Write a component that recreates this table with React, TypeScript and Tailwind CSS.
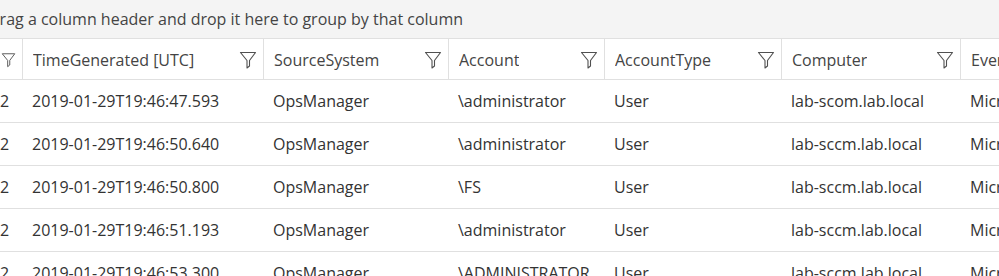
import { Fragment } from "react";

const columns = [
  { key: "c0", label: "", width: "w-[23px]" },
  { key: "time", label: "TimeGenerated [UTC]", width: "w-[241px]" },
  { key: "source", label: "SourceSystem", width: "w-[185px]" },
  { key: "account", label: "Account", width: "w-[156px]" },
  { key: "type", label: "AccountType", width: "w-[177px]" },
  { key: "computer", label: "Computer", width: "w-[179px]" },
  { key: "event", label: "EventSourceName", width: "w-[200px]" },
];

const rows = [
  ["2", "2019-01-29T19:46:47.593", "OpsManager", "\\administrator", "User", "lab-scom.lab.local", "Microsoft-Windows-Security-Auditing"],
  ["2", "2019-01-29T19:46:50.640", "OpsManager", "\\administrator", "User", "lab-sccm.lab.local", "Microsoft-Windows-Security-Auditing"],
  ["2", "2019-01-29T19:46:50.800", "OpsManager", "\\FS", "User", "lab-sccm.lab.local", "Microsoft-Windows-Security-Auditing"],
  ["2", "2019-01-29T19:46:51.193", "OpsManager", "\\administrator", "User", "lab-sccm.lab.local", "Microsoft-Windows-Security-Auditing"],
  ["2", "2019-01-29T19:46:53.300", "OpsManager", "\\ADMINISTRATOR", "User", "lab-sccm.lab.local", "Microsoft-Windows-Security-Auditing"],
];

function FilterIcon() {
  return (
    <svg width="18" height="18" viewBox="0 0 18 18" fill="none" stroke="#505050" strokeWidth="1.1" strokeLinejoin="round">
      <path d="M1.5 1.5 H16.5 L10.5 9.5 V15 L8 17 V9.5 Z" />
    </svg>
  );
}

export default function App() {
  return (
    <div className="w-[999px] h-[276px] overflow-hidden bg-white text-[#333]" style={{ fontFamily: '"Open Sans", "Noto Sans", sans-serif' }}>
      <div className="h-[38px] bg-[#f4f4f4] flex items-center pb-[1px] whitespace-nowrap text-[16px] text-[#444]">
        <span className="-ml-[12px]">Drag a column header and drop it here to group by that column</span>
      </div>

      <div className="flex h-[42px] border-y border-[#e0e0e0] whitespace-nowrap text-[16px] text-[#444]">
        {columns.map((c, i) => (
          <div
            key={c.key}
            className={`${c.width} shrink-0 flex items-center justify-between pt-[2px] ${i === 0 ? "pl-[1px]" : "pl-[10px]"} pr-[6px] border-r border-[#e0e0e0] overflow-hidden`}
          >
            <span className="truncate">{c.label}</span>
            {i < columns.length - 1 && <FilterIcon />}
          </div>
        ))}
      </div>

      {rows.map((r, ri) => (
        <div key={ri} className="flex h-[43px] border-b border-[#e0e0e0] whitespace-nowrap text-[16px]">
          {r.map((v, ci) => (
            <Fragment key={ci}>
              <div className={`${columns[ci].width} shrink-0 flex items-center ${ci === 0 ? "pl-0" : "pl-[9px]"} overflow-hidden`}>
                <span>{v}</span>
              </div>
            </Fragment>
          ))}
        </div>
      ))}
    </div>
  );
}
